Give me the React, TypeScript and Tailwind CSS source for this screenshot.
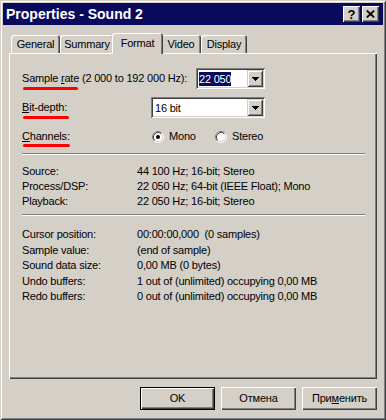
import React from "react";

const raised =
  "shadow-[inset_1px_1px_0_#fff,inset_-1px_-1px_0_#404040,inset_-2px_-2px_0_#808080]";
const raisedBtn =
  "shadow-[inset_1px_1px_0_#d4d0c8,inset_-1px_-1px_0_#404040,inset_2px_2px_0_#fff,inset_-2px_-2px_0_#808080]";
const sunken =
  "shadow-[inset_1px_1px_0_#808080,inset_-1px_-1px_0_#fff,inset_2px_2px_0_#404040,inset_-2px_-2px_0_#d4d0c8]";

function Arrow() {
  return (
    <svg width="7" height="4" viewBox="0 0 7 4" shapeRendering="crispEdges">
      <rect x="0" y="0" width="7" height="1" fill="#000" />
      <rect x="1" y="1" width="5" height="1" fill="#000" />
      <rect x="2" y="2" width="3" height="1" fill="#000" />
      <rect x="3" y="3" width="1" height="1" fill="#000" />
    </svg>
  );
}

function Combo({ w, children }: { w: string; children: React.ReactNode }) {
  return (
    <div className={`flex h-[21px] ${w} items-center bg-white p-[2px] ${sunken}`}>
      <div className="flex h-[17px] flex-1 items-center overflow-hidden pl-[1px] leading-[14px]">
        {children}
      </div>
      <div className={`flex h-[17px] w-[16px] items-center justify-center bg-[#d4d0c8] ${raisedBtn}`}>
        <Arrow />
      </div>
    </div>
  );
}

function Radio({ checked }: { checked: boolean }) {
  return (
    <svg width="12" height="12" viewBox="0 0 12 12">
      <circle cx="6" cy="6" r="5" fill="#fff" />
      <path d="M2.11 9.89 A5.5 5.5 0 0 1 9.89 2.11" fill="none" stroke="#808080" strokeWidth="1" />
      <path d="M9.89 2.11 A5.5 5.5 0 0 1 2.11 9.89" fill="none" stroke="#fff" strokeWidth="1" />
      <path d="M2.82 9.18 A4.5 4.5 0 0 1 9.18 2.82" fill="none" stroke="#404040" strokeWidth="1" />
      <path d="M9.18 2.82 A4.5 4.5 0 0 1 2.82 9.18" fill="none" stroke="#d4d0c8" strokeWidth="1" />
      {checked && <circle cx="6" cy="6" r="2" fill="#000" />}
    </svg>
  );
}

function Row({ label, value, tall }: { label: string; value: string; tall?: boolean }) {
  return (
    <div className={`flex whitespace-pre ${tall ? "h-[15.5px] leading-[15.5px]" : "h-[15px] leading-[15px]"}`}>
      <div className="w-[115px]">{label}</div>
      <div>{value}</div>
    </div>
  );
}

function Tab({ label, w, selected }: { label: string; w: string; selected?: boolean }) {
  if (selected) {
    return (
      <div
        className={`relative z-10 -mx-[2px] mb-[-1px] flex h-[21px] ${w} justify-center rounded-t-[3px] bg-[#d4d0c8] pt-[1px] leading-[18px] shadow-[inset_1px_1px_0_#fff,inset_-1px_0_0_#404040,inset_-2px_0_0_#808080]`}
      >
        {label}
      </div>
    );
  }
  return (
    <div
      className={`flex h-[18px] ${w} justify-center rounded-t-[3px] leading-[18px] shadow-[inset_1px_1px_0_#fff,inset_-1px_0_0_#404040,inset_-2px_0_0_#808080]`}
    >
      {label}
    </div>
  );
}

function Button({ children, def }: { children: React.ReactNode; def?: boolean }) {
  return (
    <div
      className={`flex h-[23px] w-[75px] items-center justify-center ${
        def ? "border border-black" : ""
      } ${raised}`}
    >
      {children}
    </div>
  );
}

export default function App() {
  return (
    <div className="h-[420px] w-[386px] bg-[#d4d0c8] p-[3px] font-['Liberation_Sans',Arial,sans-serif] text-[11px] tracking-[-0.2px] text-black shadow-[inset_1px_1px_0_#d4d0c8,inset_-1px_-1px_0_#404040,inset_2px_2px_0_#fff,inset_-2px_-2px_0_#808080]">
      {/* Title bar */}
      <div className="flex h-[22px] items-center bg-[#0a0a5c] pl-[3px] pr-[4px]">
        <div className="flex-1 text-[14px] font-bold tracking-normal text-white">Properties - Sound 2</div>
        <div className="flex gap-[2px]">
          <div className={`flex h-[16px] w-[17px] items-center justify-center bg-[#d4d0c8] ${raised}`}>
            <span className="text-[13px] font-bold leading-none tracking-normal">?</span>
          </div>
          <div className={`flex h-[16px] w-[17px] items-center justify-center bg-[#d4d0c8] ${raised}`}>
            <svg width="9" height="8" viewBox="0 0 9 8">
              <path d="M0.8 0.5 L8.2 7.5 M8.2 0.5 L0.8 7.5" stroke="#000" strokeWidth="1.8" />
            </svg>
          </div>
        </div>
      </div>

      {/* Body */}
      <div className="px-[6px] pt-[8px]">
        {/* Tabs */}
        <div className="flex h-[20px] items-end pl-[2px]">
          <Tab label="General" w="w-[49px]" />
          <Tab label="Summary" w="w-[54px]" />
          <Tab label="Format" w="w-[51px]" selected />
          <Tab label="Video" w="w-[40px]" />
          <Tab label="Display" w="w-[46px]" />
        </div>

        {/* Panel */}
        <div className="h-[326px] pl-[13px] pr-[12px] pt-[15px] shadow-[inset_1px_1px_0_#fff,inset_-1px_-1px_0_#404040,inset_-2px_-2px_0_#808080]">
          <div className="relative flex h-[21px] items-center">
            <div className="w-[174px] leading-[21px]">
              Sample <u className="underline-offset-[1px]">r</u>ate (2 000 to 192 000 Hz):
            </div>
            <Combo w="w-[69px]">
              <span className="bg-[#0a0a5c] text-white">22 050</span>
            </Combo>
            <span className="absolute left-[1px] top-[19px] h-[3px] w-[55px] rounded-full bg-[#ff0000]" />
          </div>

          <div className="relative mt-[8px] flex h-[21px] items-center">
            <div className="w-[129px] leading-[21px]">
              <u className="underline-offset-[1px]">B</u>it-depth:
            </div>
            <Combo w="w-[114px]">
              <span className="pl-[1px]">16 bit</span>
            </Combo>
            <span className="absolute left-[1px] top-[19px] h-[3px] w-[46px] rounded-full bg-[#ff0000]" />
          </div>

          <div className="relative mt-[8px] flex h-[21px] items-center">
            <div className="w-[130px] leading-[21px]">
              <u className="underline-offset-[1px]">C</u>hannels:
            </div>
            <div className="flex w-[63px] items-center gap-[5px]">
              <Radio checked />
              <span>Mono</span>
            </div>
            <div className="flex items-center gap-[5px]">
              <Radio checked={false} />
              <span>Stereo</span>
            </div>
            <span className="absolute left-[1px] top-[18px] h-[3px] w-[47px] rounded-full bg-[#ff0000]" />
          </div>

          <div className="mt-[6px] h-[2px] border-t border-t-[#808080] bg-white" />

          <div className="mt-[9px]">
            <Row label="Source:" value="44 100 Hz; 16-bit; Stereo" />
            <Row label="Process/DSP:" value="22 050 Hz; 64-bit (IEEE Float); Mono" />
            <Row label="Playback:" value="22 050 Hz; 16-bit; Stereo" />
          </div>

          <div className="mt-[5px] h-[2px] border-t border-t-[#808080] bg-white" />

          <div className="mt-[11px]">
            <Row tall label="Cursor position:" value="00:00:00,000  (0 samples)" />
            <Row tall label="Sample value:" value="(end of sample)" />
            <Row tall label="Sound data size:" value="0,00 MB (0 bytes)" />
            <Row tall label="Undo buffers:" value="1 out of (unlimited) occupying 0,00 MB" />
            <Row tall label="Redo buffers:" value="0 out of (unlimited) occupying 0,00 MB" />
          </div>
        </div>

        {/* Buttons */}
        <div className="mt-[8px] flex justify-end gap-[6px]">
          <Button def>OK</Button>
          <Button>Отмена</Button>
          <Button>
            <span>
              При<u className="underline-offset-[1px]">м</u>енить
            </span>
          </Button>
        </div>
      </div>
    </div>
  );
}
